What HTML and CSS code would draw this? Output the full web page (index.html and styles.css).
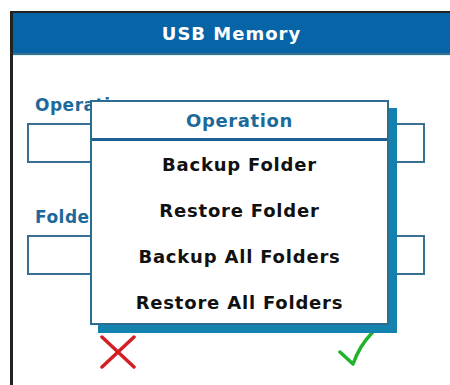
FILE: index.html
```html
<!DOCTYPE html>
<html lang="en">
<head>
    <meta charset="UTF-8">
    <meta name="viewport" content="width=device-width, initial-scale=1.0">
    <title>USB Memory</title>
    <link rel="stylesheet" href="styles.css">
</head>
<body>
    <div id="screen">
        <div id="title-bar">USB Memory</div>

        <div id="form">
            <div class="label">Operation</div>
            <div class="field"></div>
            <div class="label">Folder</div>
            <div class="field"></div>

            <div id="actions">
                <!-- cancel -->
                <svg class="icon" width="36" height="34" viewBox="0 0 36 34">
                    <path d="M2 2 L34 32 M34 2 L2 32" stroke="#d21f26" stroke-width="3.5" stroke-linecap="round" fill="none"/>
                </svg>
                <!-- ok -->
                <svg class="icon ok" width="36" height="36" viewBox="0 0 36 36">
                    <path d="M2 21 L15 33 C19 22 25 11 34 2" stroke="#1fb32a" stroke-width="3.5" stroke-linecap="round" stroke-linejoin="round" fill="none"/>
                </svg>
            </div>
        </div>

        <!-- Popup menu over the form -->
        <div id="menu">
            <div id="menu-title">Operation</div>
            <ul id="menu-list">
                <li>Backup Folder</li>
                <li>Restore Folder</li>
                <li>Backup All Folders</li>
                <li>Restore All Folders</li>
            </ul>
        </div>
    </div>
</body>
</html>
```

FILE: styles.css
```css
body {
    margin: 0;
    background-color: white;
    font-family: "DejaVu Sans", Verdana, sans-serif;
    font-weight: bold;
}

#screen {
    position: relative;
    margin: 11px 0 0 10px;
    border-top: 2px solid #222;
    border-left: 3px solid #222;
    height: 372px;
}

#title-bar {
    height: 40px;
    background-color: #0764a6;
    border-bottom: 2px solid #3d6f8f;
    box-shadow: 0 1px 0 #d8f4f8;
    color: white;
    font-size: 18px;
    letter-spacing: 1px;
    display: flex;
    align-items: center;
    justify-content: center;
}

#form {
    padding: 40px 12px 0 14px;
}

.label {
    color: #1d6a9a;
    font-size: 17px;
    letter-spacing: 0.5px;
    line-height: 20px;
    padding-left: 8px;
    margin-bottom: 8px;
}

.field {
    width: 394px;
    height: 36px;
    border: 2px solid #3a6f94;
    margin-bottom: 44px;
}

#actions {
    display: flex;
    align-items: flex-start;
    justify-content: space-between;
    padding: 0 64px 0 73px;
    margin-top: 60px;
}

.ok {
    margin-top: -4px;
}

#menu {
    position: absolute;
    top: 87px;
    left: 77px;
    width: 295px;
    height: 221px;
    background-color: white;
    border: 2px solid #2d6c92;
    box-shadow: 8px 8px 0 #1482ae;
}

#menu-title {
    height: 36px;
    border-bottom: 3px solid #1f5f95;
    color: #1d6a9a;
    font-size: 18px;
    letter-spacing: 0.6px;
    display: flex;
    align-items: center;
    justify-content: center;
}

#menu-list {
    list-style: none;
    margin: 0;
    padding: 0;
}

#menu-list li {
    height: 46px;
    display: flex;
    align-items: center;
    justify-content: center;
    color: #111;
    font-size: 18px;
    letter-spacing: 0.8px;
}
```
